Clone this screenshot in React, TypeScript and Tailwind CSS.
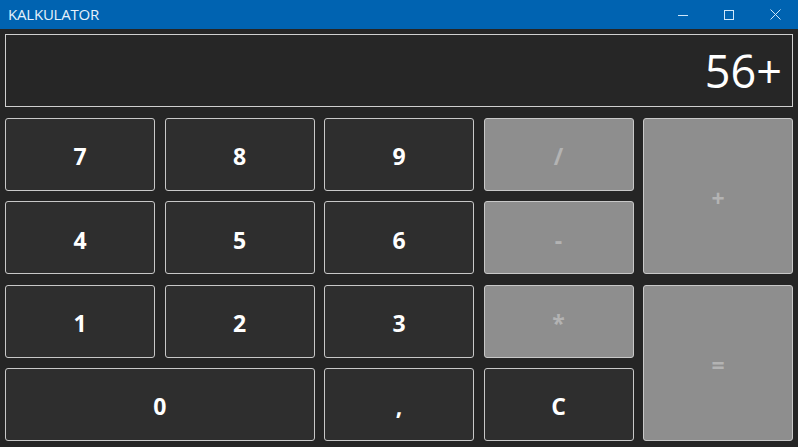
import React from 'react';

type Key = {
  label: string;
  op?: boolean;
  span?: string;
};

const keys: Key[] = [
  { label: '7' },
  { label: '8' },
  { label: '9' },
  { label: '/', op: true },
  { label: '+', op: true, span: 'row-span-2' },
  { label: '4' },
  { label: '5' },
  { label: '6' },
  { label: '-', op: true },
  { label: '1' },
  { label: '2' },
  { label: '3' },
  { label: '*', op: true },
  { label: '=', op: true, span: 'row-span-2' },
  { label: '0', span: 'col-span-2' },
  { label: ',' },
  { label: 'C' },
];

function TitleBar() {
  return (
    <div className="flex h-[29px] items-center justify-between bg-[#0063b1] text-[#e6f1fb]">
      <span className="pl-[8px] text-[15px] font-['Open_Sans',sans-serif] tracking-[-0.2px]">KALKULATOR</span>
      <div className="flex h-full items-center">
        <button className="flex h-full w-[46px] items-center justify-center">
          <svg width="10" height="10" viewBox="0 0 10 10" fill="none" stroke="#cfe7fa" strokeWidth="1">
            <path d="M0 5.5h10" />
          </svg>
        </button>
        <button className="flex h-full w-[46px] items-center justify-center">
          <svg width="10" height="10" viewBox="0 0 10 10" fill="none" stroke="#cfe7fa" strokeWidth="1">
            <rect x="0.5" y="0.5" width="9" height="9" />
          </svg>
        </button>
        <button className="flex h-full w-[46px] items-center justify-center">
          <svg width="11" height="11" viewBox="0 0 11 11" fill="none" stroke="#cfe7fa" strokeWidth="1">
            <path d="M0.5 0.5l10 10M10.5 0.5l-10 10" />
          </svg>
        </button>
      </div>
    </div>
  );
}

export default function App() {
  return (
    <div className="flex h-[447px] w-[798px] flex-col bg-[#252525] font-['Open_Sans',sans-serif]">
      <TitleBar />
      <div className="flex flex-1 flex-col px-[5px] pt-[5px]">
        <div className="flex h-[73px] items-center justify-end border border-[#cfcfcf] bg-[#262626] pr-[10px]">
          <span className="text-[45px] font-normal leading-none text-white">56+</span>
        </div>
        <div className="mt-[11px] grid h-[323px] grid-cols-5 grid-rows-4 gap-x-[9.5px] gap-y-[10.3px]">
          {keys.map((k) => (
            <button
              key={k.label}
              className={`flex items-center justify-center rounded-[3px] border border-[#c8c8c8] pt-[4px] text-[23px] font-bold ${
                k.op ? 'bg-[#8e8e8e] text-[#b3b3b3]' : 'bg-[#2e2e2e] text-white'
              } ${k.span ?? ''}`}
            >
              {k.label}
            </button>
          ))}
        </div>
      </div>
    </div>
  );
}
